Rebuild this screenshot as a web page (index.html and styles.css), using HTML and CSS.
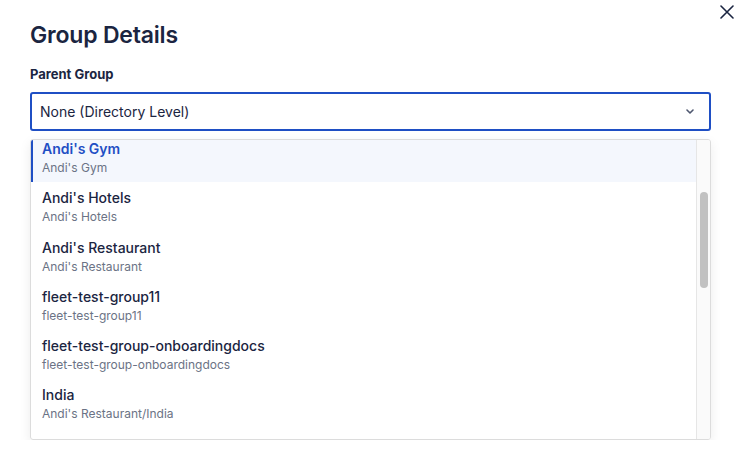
FILE: index.html
```html
<!DOCTYPE html>
<html lang="en">
<head>
<meta charset="utf-8">
<title>Group Details</title>
<link rel="stylesheet" href="styles.css">
</head>
<body>
<div class="panel">
  <button class="close" aria-label="Close">
    <svg width="14" height="14" viewBox="0 0 14 14"><path d="M1 1L13 13M13 1L1 13" stroke="#1b2541" stroke-width="1.6" stroke-linecap="round"/></svg>
  </button>
  <h1 class="title">Group Details</h1>
  <label class="label">Parent Group</label>
  <div class="select">
    <span class="select-value">None (Directory Level)</span>
    <svg class="chevron" width="8" height="5" viewBox="0 0 8 5"><path d="M1 1L4 4L7 1" fill="none" stroke="#4f5870" stroke-width="1.6" stroke-linecap="round" stroke-linejoin="round"/></svg>
  </div>
  <div class="menu">
    <div class="list">
      <div class="list-inner">
        <div class="item active"><div class="item-title">Andi's Gym</div><div class="item-sub">Andi's Gym</div></div>
        <div class="item"><div class="item-title">Andi's Hotels</div><div class="item-sub">Andi's Hotels</div></div>
        <div class="item"><div class="item-title">Andi's Restaurant</div><div class="item-sub">Andi's Restaurant</div></div>
        <div class="item"><div class="item-title">fleet-test-group11</div><div class="item-sub">fleet-test-group11</div></div>
        <div class="item"><div class="item-title">fleet-test-group-onboardingdocs</div><div class="item-sub">fleet-test-group-onboardingdocs</div></div>
        <div class="item"><div class="item-title">India</div><div class="item-sub">Andi's Restaurant/India</div></div>
        <div class="item"><div class="item-title">Kimberly</div><div class="item-sub">Andi's Hotels/Kimberly</div></div>
      </div>
    </div>
    <div class="scrollbar"><div class="thumb"></div></div>
  </div>
</div>
</body>
</html>
```

FILE: styles.css
```css
html, body {
  margin: 0;
  padding: 0;
  background: #ffffff;
}
body {
  font-family: Inter, "Noto Sans", sans-serif;
  color: #1b2541;
}
.panel {
  position: relative;
  padding: 20px 42px 0 30px;
  display: flex;
  flex-direction: column;
}
.close {
  position: absolute;
  top: 5px;
  left: 720px;
  width: 14px;
  height: 14px;
  padding: 0;
  border: 0;
  background: none;
  display: flex;
}
.title {
  margin: 0;
  font-size: 23px;
  font-weight: 600;
  line-height: 30px;
  letter-spacing: -0.2px;
  color: #1b2541;
}
.label {
  margin-top: 16px;
  font-size: 13px;
  font-weight: 700;
  line-height: 16px;
  color: #1b2541;
}
.select {
  margin-top: 10px;
  height: 39px;
  box-sizing: border-box;
  border: 2px solid #1f4fc4;
  border-radius: 3px;
  display: flex;
  align-items: center;
  justify-content: space-between;
  padding: 0 15px 0 8px;
}
.select-value {
  font-size: 14px;
  color: #1b2541;
}
.menu {
  margin-top: 8px;
  height: 301px;
  box-sizing: border-box;
  border: 1px solid #dcdcdc;
  border-radius: 3px;
  box-shadow: 0 4px 12px rgba(0, 0, 0, 0.08);
  display: flex;
  overflow: hidden;
}
.list {
  flex: 1;
  overflow: hidden;
}
.list-inner {
  margin-top: -7px;
}
.item {
  height: 49.3px;
  box-sizing: border-box;
  padding: 6px 10px 0 9px;
  border-left: 2px solid transparent;
}
.item.active {
  background: #f4f7fd;
  border-left-color: #1f4fc4;
}
.item-title {
  font-size: 14px;
  font-weight: 500;
  line-height: 20px;
  color: #1b2541;
}
.item.active .item-title {
  color: #1f4fc4;
  font-weight: 600;
}
.item-sub {
  font-size: 12px;
  line-height: 17px;
  color: #6b7385;
}
.scrollbar {
  width: 14px;
  background: #fafafa;
  border-left: 1px solid #e6e6e6;
  padding: 52px 2px 0 3px;
  box-sizing: border-box;
}
.thumb {
  width: 8px;
  height: 96px;
  background: #c1c1c1;
  border-radius: 4px;
}
```
